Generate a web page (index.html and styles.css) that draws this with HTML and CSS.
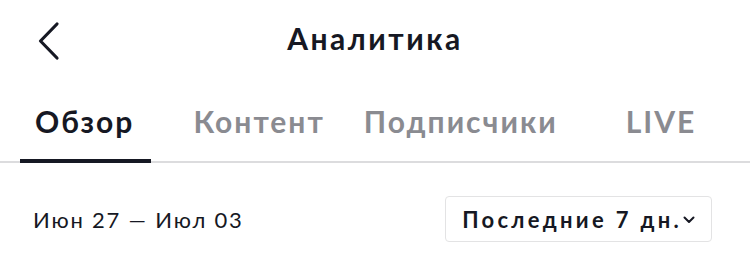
FILE: index.html
```html
<!DOCTYPE html>
<html lang="ru">
<head>
<meta charset="utf-8">
<title>Аналитика</title>
<link rel="stylesheet" href="styles.css">
</head>
<body>
<div class="page">
  <header class="topbar">
    <div class="back">
      <svg width="24" height="40" viewBox="0 0 24 40" aria-hidden="true">
        <path d="M21 3 L4.5 20 L21 37" fill="none" stroke="#161823" stroke-width="3.2" stroke-linecap="round" stroke-linejoin="round"/>
      </svg>
    </div>
    <h1 class="title">Аналитика</h1>
    <div class="spacer"></div>
  </header>
  <nav class="tabs">
    <div class="tab tab-1 active">Обзор</div>
    <div class="tab tab-2">Контент</div>
    <div class="tab tab-3">Подписчики</div>
    <div class="tab tab-4">LIVE</div>
  </nav>
  <section class="range">
    <div class="dates">Июн 27 — Июл 03</div>
    <button class="picker">
      <span class="picker-label">Последние 7 дн.</span>
      <svg class="chev" width="12" height="8" viewBox="0 0 12 8" aria-hidden="true">
        <path d="M1.5 1.5 L6 6 L10.5 1.5" fill="none" stroke="#161823" stroke-width="2" stroke-linecap="round" stroke-linejoin="round"/>
      </svg>
    </button>
  </section>
</div>
</body>
</html>
```

FILE: styles.css
```css
html, body {
  margin: 0;
  padding: 0;
  background: #ffffff;
}
body {
  font-family: "Lato", "Noto Sans", sans-serif;
  color: #161823;
}
.page {
  width: 750px;
  height: 272px;
  overflow: hidden;
}
.topbar {
  height: 82px;
  display: grid;
  grid-template-columns: 1fr auto 1fr;
  align-items: center;
}
.back {
  padding-left: 36px;
  display: flex;
  align-items: center;
}
.title {
  margin: 0;
  padding-bottom: 6px;
  font-size: 30px;
  font-weight: 700;
  letter-spacing: 2.5px;
  line-height: 1;
}
.tabs {
  display: flex;
  height: 81px;
  border-bottom: 2px solid #dcdcde;
  box-sizing: border-box;
  padding-left: 20px;
}
.tab {
  position: relative;
  display: flex;
  align-items: center;
  padding: 0 17px 1px 15px;
  font-size: 30px;
  font-weight: 700;
  letter-spacing: 2px;
  color: #8a8b91;
  height: 100%;
  box-sizing: border-box;
}
.tab.active {
  color: #161823;
}
.tab.active::after {
  content: "";
  position: absolute;
  left: 0;
  right: 0;
  bottom: -2px;
  height: 4px;
  background: #161823;
}
.tab-2 { margin-left: 27px; }
.tab-3 { margin-left: 7px; }
.tab-4 { margin-left: 36px; }
.range {
  display: flex;
  justify-content: space-between;
  align-items: center;
  padding: 0 38px 0 33px;
  height: 112px;
}
.dates {
  font-size: 22px;
  font-weight: 400;
  letter-spacing: 1.8px;
  color: #161823;
}
.picker {
  display: flex;
  align-items: center;
  gap: 1px;
  height: 46px;
  padding: 0 16px 0 16.5px;
  background: #ffffff;
  border: 1.5px solid #e3e3e4;
  border-radius: 4px;
  font-family: "Lato", "Noto Sans", sans-serif;
  font-size: 22px;
  font-weight: 700;
  color: #161823;
  letter-spacing: 3.3px;
}
.chev {
  display: block;
  margin-top: 2px;
}
```
